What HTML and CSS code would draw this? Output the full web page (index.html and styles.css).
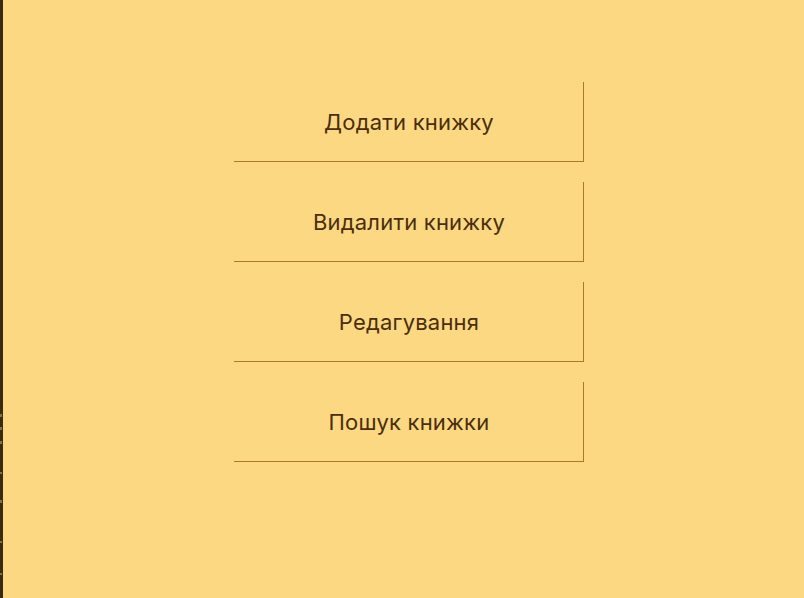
FILE: index.html
```html
<!DOCTYPE html>
<html lang="uk">
<head>
<meta charset="utf-8">
<link rel="stylesheet" href="styles.css">
</head>
<body>
<div class="app">
  <aside class="side">
    <span class="mk m1"></span>
    <span class="mk m2"></span>
    <span class="mk m3"></span>
    <span class="mk m4"></span>
    <span class="mk m5"></span>
    <span class="mk m6"></span>
    <span class="mk m7"></span>
  </aside>
  <main class="menu">
    <button class="btn">Додати книжку</button>
    <button class="btn">Видалити книжку</button>
    <button class="btn">Редагування</button>
    <button class="btn">Пошук книжки</button>
  </main>
</div>
</body>
</html>
```
FILE: styles.css
```css
html, body {
  margin: 0;
  padding: 0;
  height: 100%;
  background: #fcd882;
}
.app {
  display: flex;
  height: 598px;
  width: 804px;
  overflow: hidden;
}
.side {
  width: 3px;
  flex: none;
  background: #3b2a12;
  position: relative;
}
.mk {
  position: absolute;
  left: 0;
  width: 2px;
  height: 3px;
  background: #8a7240;
}
.m1 { top: 414px; }
.m2 { top: 427px; }
.m3 { top: 441px; }
.m4 { top: 472px; height: 2px; }
.m5 { top: 500px; }
.m6 { top: 541px; height: 2px; }
.m7 { top: 573px; height: 2px; }
.menu {
  flex: 1;
  display: flex;
  flex-direction: column;
  align-items: flex-start;
  gap: 20px;
  padding: 82px 0 0 231px;
}
.btn {
  width: 350px;
  height: 80px;
  box-sizing: border-box;
  background: transparent;
  border: none;
  border-right: 1px solid #a57c2c;
  border-bottom: 1px solid #a57c2c;
  font-family: Inter, "Noto Sans", sans-serif;
  font-size: 22px;
  letter-spacing: 0.2px;
  color: #4a2e0e;
  padding: 0 0 0 1px;
  text-align: center;
  cursor: pointer;
}
```
